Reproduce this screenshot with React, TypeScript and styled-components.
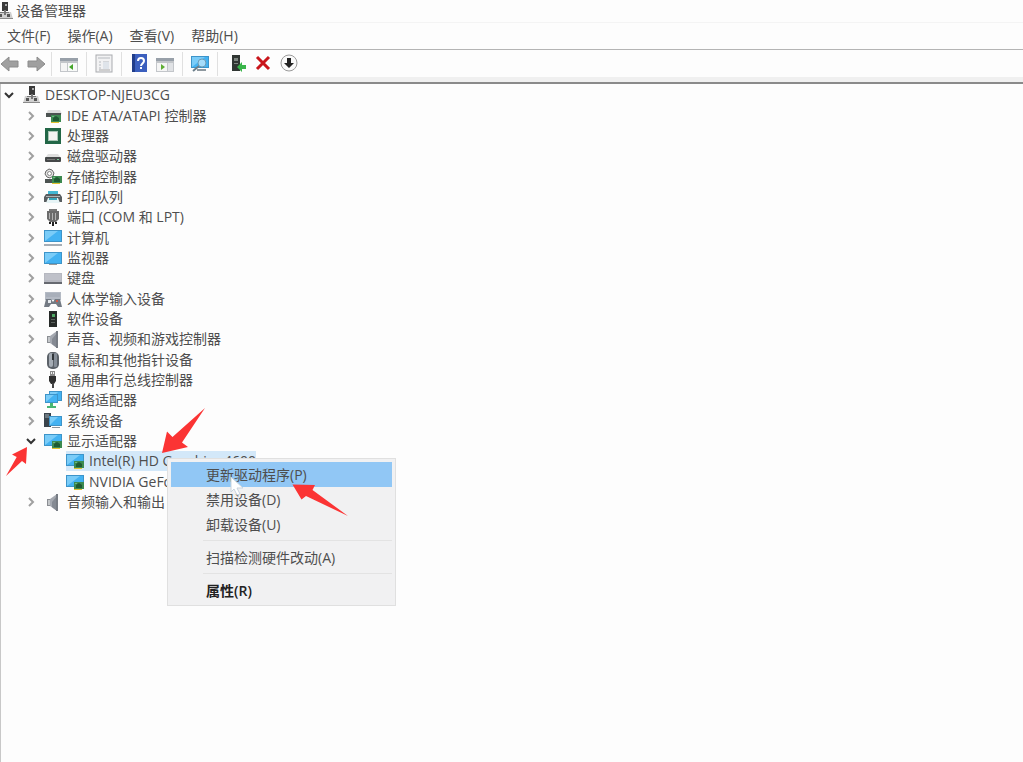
import React from "react";
import styled, { createGlobalStyle, css } from "styled-components";

const GlobalStyle = createGlobalStyle`
  * { box-sizing: border-box; }
  body {
    margin: 0;
    background: #fdfdfd;
    color: #4e4e4e;
    font-family: "Open Sans", "Noto Sans CJK SC", sans-serif;
    font-size: 14px;
  }
  button { font: inherit; color: inherit; border: 0; padding: 0; background: none; }
  ul { list-style: none; margin: 0; padding: 0; }
`;

const Window = styled.div`
  display: flex;
  flex-direction: column;
  min-height: 100vh;
`;

const TitleBar = styled.header`
  display: flex;
  align-items: center;
  gap: 3px;
  height: 22px;
  overflow: hidden;
`;

const Title = styled.h1`
  margin: 0;
  font-size: 14px;
  line-height: 20px;
  font-weight: 400;
`;

const TitleIcon = styled.span`
  display: flex;
  width: 13px;
  justify-content: flex-end;
  overflow: hidden;
  svg { flex: none; }
`;

const MenuBar = styled.nav`
  display: flex;
  gap: 17px;
  height: 28px;
  padding: 0 7px;
  border-top: 1px solid #f4f4f4;
  border-bottom: 1px solid #b4b4b4;
`;

const MenuButton = styled.button`
  line-height: 26px;
  white-space: nowrap;
`;

const ToolBar = styled.div`
  display: flex;
  align-items: center;
  height: 27px;
`;

const ToolGroup = styled.div`
  display: flex;
  align-items: center;
  gap: 6px;
  height: 24px;
  padding: 0 7px;
  border-right: 1px solid #e0e0e0;
  &:first-child { padding: 0 5px 0 0; }
  &:last-child { border-right: 0; padding: 0 10px; }
`;

const ToolButton = styled.button`
  display: flex;
  width: 20px;
  height: 20px;
  svg { width: 20px; height: 20px; }
`;

const ToolEdge = styled.div`
  height: 7px;
  background: #f0f0f0;
  border-bottom: 2px solid #8a8a8a;
`;

const Pane = styled.main`
  position: relative;
  flex: 1;
  padding-top: 1px;
  border-left: 1px solid #c8c8c8;
`;

const Row = styled.li<{ $level: number }>`
  display: flex;
  align-items: center;
  gap: 5px;
  height: 20px;
  padding-left: ${(p) => p.$level * 22}px;
  &:nth-child(3n + 1) { margin-bottom: 1px; }
`;

const Toggle = styled.button`
  display: flex;
  align-items: center;
  justify-content: center;
  width: 16px;
  height: 20px;
  visibility: ${(p) => (p.disabled ? "hidden" : "visible")};
`;

const Node = styled.span<{ $selected?: boolean }>`
  display: flex;
  align-items: center;
  gap: 5px;
  height: 20px;
  line-height: 20px;
  white-space: nowrap;
  ${(p) => p.$selected && css`background: #d3e8f9;`}
  svg { flex: none; }
`;

const ContextMenu = styled.div`
  position: absolute;
  left: 166px;
  top: 374px;
  width: 229px;
  padding: 3px 3px 2px;
  background: #f1f1f2;
  border: 1px solid #e0e0e0;
`;

const ContextItem = styled.button<{ $active?: boolean; $strong?: boolean }>`
  display: block;
  width: 100%;
  height: 25px;
  padding-left: 35px;
  line-height: 24px;
  text-align: left;
  white-space: nowrap;
  background: ${(p) => (p.$active ? "#91c7f5" : "transparent")};
  ${(p) => p.$strong && css`font-weight: 600; color: #222;`}
`;

const Separator = styled.hr`
  height: 1px;
  margin: 3px 0 4px 32px;
  border: 0;
  background: #e3e3e3;
`;

const Annotations = styled.svg`
  position: absolute;
  left: 0;
  top: 0;
  pointer-events: none;
`;

const screen = (x: number, y: number, w: number, h: number) => (
  <>
    <rect x={x} y={y} width={w} height={h} fill="#3d94c9" />
    <rect x={x + 1} y={y + 1} width={w - 2} height={h - 2} fill="#43b2f2" />
    <path d={`M${x + 1} ${y + h - 1}V${y + 1}H${x + w - 4}Z`} fill="#7accf8" />
  </>
);

const chip = (x: number, y: number) => (
  <>
    <rect x={x} y={y + 6} width="8" height="2" fill="#e2c02f" />
    <rect x={x} y={y} width="10" height="7" fill="#3c8a50" />
    <path d={`M${x + 2} ${y + 3}l3-2 3 2v3H${x + 2}z`} fill="#1f5a33" />
    <rect x={x + 1} y={y + 1} width="2" height="1" fill="#6db581" />
  </>
);

const glyphs: Record<string, React.ReactNode> = {
  root: (
    <>
      <rect x="7" y="0" width="6" height="9" fill="#3a3a3a" />
      <rect x="10" y="2" width="2" height="2" fill="#aaa" />
      <path d="M3 10h13l2 7H1z" fill="#cfcfcf" />
      <path d="M1 16h17v1H1z" fill="#8a8a8a" />
      <path d="M9 8h2v5H9zM5 10h9v1H5z" fill="#777" />
      <rect x="4" y="12" width="3" height="3" fill="#555" />
      <rect x="12" y="12" width="3" height="3" fill="#555" />
    </>
  ),
  ide: (
    <>
      <path d="M4 3h12l2 4H2z" fill="#dcdcdc" />
      <rect x="2" y="6" width="15" height="4" fill="#4c5351" />
      {chip(7, 8)}
    </>
  ),
  cpu: (
    <>
      <rect x="1" y="1" width="16" height="16" fill="#226747" />
      <rect x="4" y="4" width="10" height="10" fill="#a9c5b5" />
      <rect x="5" y="5" width="8" height="8" fill="#f3f3f1" />
    </>
  ),
  disk: (
    <>
      <path d="M4 7h10l3 4H1z" fill="#dedede" />
      <rect x="1" y="10" width="16" height="5" rx="1" fill="#454849" />
      <rect x="3" y="12" width="8" height="1" fill="#777" />
      <rect x="13" y="12" width="2" height="1" fill="#76c694" />
    </>
  ),
  storage: (
    <>
      <path d="M5 1l3 1 2 3-1 3-3 2-3-1-2-3 1-3z" fill="#e4e4e4" stroke="#666" />
      <circle cx="5.500" cy="5.500" r="2" fill="#fff" stroke="#888" />
      <rect x="1" y="11" width="10" height="4" fill="#4c5351" />
      {chip(8, 8)}
    </>
  ),
  printer: (
    <>
      <path d="M4 3h10v4H4z" fill="#43b7d4" />
      <path d="M2 6h14l2 3v5H0V9z" fill="#595e61" />
      <path d="M2 8h14v1H2z" fill="#aeb3b5" />
      <path d="M4 10h10l2 5H2z" fill="#e7f4f6" />
      <path d="M5 10h8v2H5z" fill="#3aa7bd" />
    </>
  ),
  port: (
    <>
      <rect x="5" y="1" width="8" height="4" fill="#777" />
      <path d="M3 3h12v8l-3 3H6l-3-3z" fill="#6b6b6b" />
      <path d="M5 5h1v6H5zM8 5h1v7H8zM11 5h1v7h-1z" fill="#b2b2b2" />
      <path d="M5 14h2v2H5zM8 14h2v4H8zM11 14h2v2h-2z" fill="#222" />
    </>
  ),
  computer: (
    <>
      {screen(0, 1, 18, 12)}
      <path d="M0 15h18v2H0z" fill="#a6adb5" />
    </>
  ),
  monitor: (
    <>
      {screen(0, 3, 18, 12)}
      <path d="M5 15h8v1H5z" fill="#999" />
    </>
  ),
  keyboard: (
    <>
      <rect x="0" y="4" width="18" height="10" fill="#b6b8c0" />
      <path d="M1 6h16M1 8h16M1 10h16" stroke="#c8cad2" />
      <rect x="0" y="13" width="18" height="2" fill="#666970" />
    </>
  ),
  hid: (
    <>
      <rect x="1" y="2" width="16" height="8" fill="#b4bac4" />
      <path d="M2 4h14M2 6h14" stroke="#9da4b0" />
      <path d="M0 17l2-8h5l2 3 2-3h5l2 8h-4l-2-3H7l-2 3z" fill="#737a83" />
      <rect x="4" y="10" width="3" height="3" fill="#e6eaee" />
      <rect x="12" y="10" width="2" height="2" fill="#d15a4a" />
    </>
  ),
  software: (
    <>
      <rect x="5" y="1" width="8" height="16" fill="#262a28" />
      <rect x="8" y="4" width="3" height="3" fill="#4ea863" />
      <path d="M7 9h4v1H7zM7 12h4v1H7z" fill="#5b625e" />
    </>
  ),
  speaker: (
    <>
      <path d="M3 6h4v7H3z" fill="#8b8e93" />
      <path d="M6 6l7-5v17l-7-5z" fill="#a4a8b0" />
      <path d="M8 9l5-6v15l-5-4z" fill="#858a93" />
      <path d="M12 1h2v17h-2z" fill="#777c84" />
      <path d="M4 7h2v5H4z" fill="#c3c6c9" />
    </>
  ),
  mouse: (
    <>
      <rect x="3" y="1" width="12" height="17" rx="5" fill="#5b6168" />
      <rect x="5" y="2" width="4" height="14" rx="2" fill="#a5acb4" />
      <rect x="10" y="2" width="3" height="14" rx="1" fill="#868e98" />
      <rect x="8" y="3" width="2" height="6" fill="#31363b" />
    </>
  ),
  usb: (
    <>
      <rect x="6" y="0" width="5" height="5" fill="#8a8a8a" />
      <path d="M7 1h1v2H7zM9 1h1v2H9z" fill="#f2f2f2" />
      <path d="M5 5h7v5l-2 3H7l-2-3z" fill="#303030" />
      <path d="M8 12h2v5H8z" fill="#444" />
    </>
  ),
  network: (
    <>
      {screen(5, 0, 13, 10)}
      {screen(1, 3, 13, 9)}
      <path d="M6 12h3v3h3v2H3v-2h3z" fill="#48b573" />
    </>
  ),
  system: (
    <>
      <rect x="0" y="1" width="7" height="14" fill="#3a444c" />
      <path d="M1 3h4M1 5h4" stroke="#9eabb3" />
      {screen(5, 4, 13, 10)}
      <path d="M8 15h8v1H8z" fill="#8a939a" />
    </>
  ),
  display: (
    <>
      {screen(0, 2, 18, 12)}
      {chip(8, 9)}
    </>
  ),
};

const Icon = ({ name }: { name: string }) => (
  <svg width="18" height="18" viewBox="0 0 18 18" aria-hidden="true">{glyphs[name]}</svg>
);

const toolPanel = (flip: boolean) => (
  <>
    <rect x="1" y="4" width="18" height="14" fill="#c3c6ca" />
    <rect x="1" y="4" width="18" height="3" fill="#98a0a9" />
    <rect x="2" y="9" width={flip ? 10 : 6} height="8" fill="#f5f5f5" />
    <rect x={flip ? 13 : 9} y="9" width={flip ? 5 : 9} height="8" fill={flip ? "#e0e2e5" : "#f8faf8"} />
    {flip ? <path d="M6 10l4 3-4 3z" fill="#5dad32" /> : <path d="M14 10l-4 3 4 3z" fill="#45a52b" />}
  </>
);

const arrow = "M1 10l8-7v4h9v6H9v4z";

const tools: { label: string; art: React.ReactNode }[][] = [
  [
    { label: "后退", art: <path d={arrow} fill="#a0a0a0" stroke="#8c8c8c" /> },
    { label: "前进", art: <path d={arrow} transform="matrix(-1 0 0 1 20 0)" fill="#a0a0a0" stroke="#8c8c8c" /> },
  ],
  [{ label: "显示/隐藏控制台树", art: toolPanel(false) }],
  [
    {
      label: "属性",
      art: (
        <>
          <rect x="2" y="1" width="16" height="17" fill="#f2f2f3" stroke="#a9abaf" />
          <path d="M4 4h12M5 8h2M9 8h6M5 11h2M9 11h6M5 14h2" stroke="#b6babf" />
          <rect x="9" y="8" width="6" height="7" fill="#dfe4ea" />
          <path d="M5 16h11" stroke="#aaa" />
        </>
      ),
    },
  ],
  [
    {
      label: "帮助",
      art: (
        <>
          <rect x="3" y="0" width="15" height="18" fill="#3b5fbe" />
          <rect x="3" y="0" width="3" height="18" fill="#213d8a" />
          <path d="M9 7c0-4 6-4 6 0 0 2-3 3-3 5" fill="none" stroke="#fff" strokeWidth="2" />
          <rect x="11" y="13" width="2" height="2" fill="#fff" />
        </>
      ),
    },
    { label: "操作窗格", art: toolPanel(true) },
  ],
  [
    {
      label: "扫描检测硬件改动",
      art: (
        <>
          {screen(1, 2, 18, 12)}
          <circle cx="12" cy="9" r="4" fill="#a5dcfa" stroke="#6d9bb5" />
          <path d="M9 12l-6 5" stroke="#6c7f8b" strokeWidth="2" />
          <path d="M7 16h9" stroke="#8e989f" strokeWidth="2" />
        </>
      ),
    },
  ],
  [
    {
      label: "更新驱动程序",
      art: (
        <>
          <rect x="4" y="1" width="8" height="16" fill="#303633" />
          <path d="M6 4h4v3H6zM6 9h4v1H6z" fill="#7e8681" />
          <path d="M9 13l5-5v3h4v4h-4v3z" fill="#39b54a" />
        </>
      ),
    },
    { label: "卸载设备", art: <path d="M3 3l12 12M15 3L3 15" stroke="#c9151b" strokeWidth="3" /> },
    {
      label: "禁用设备",
      art: (
        <>
          <circle cx="9" cy="9" r="8" fill="#fafafa" stroke="#9b9b9b" />
          <path d="M7 4h4v5h3l-5 5-5-5h3z" fill="#222" />
        </>
      ),
    },
  ],
];

type Item = { icon: string; text: string; level: number; open?: boolean; leaf?: boolean; selected?: boolean };

const items: Item[] = [
  { icon: "root", text: "DESKTOP-NJEU3CG", level: 0, open: true },
  { icon: "ide", text: "IDE ATA/ATAPI 控制器", level: 1 },
  { icon: "cpu", text: "处理器", level: 1 },
  { icon: "disk", text: "磁盘驱动器", level: 1 },
  { icon: "storage", text: "存储控制器", level: 1 },
  { icon: "printer", text: "打印队列", level: 1 },
  { icon: "port", text: "端口 (COM 和 LPT)", level: 1 },
  { icon: "computer", text: "计算机", level: 1 },
  { icon: "monitor", text: "监视器", level: 1 },
  { icon: "keyboard", text: "键盘", level: 1 },
  { icon: "hid", text: "人体学输入设备", level: 1 },
  { icon: "software", text: "软件设备", level: 1 },
  { icon: "speaker", text: "声音、视频和游戏控制器", level: 1 },
  { icon: "mouse", text: "鼠标和其他指针设备", level: 1 },
  { icon: "usb", text: "通用串行总线控制器", level: 1 },
  { icon: "network", text: "网络适配器", level: 1 },
  { icon: "system", text: "系统设备", level: 1 },
  { icon: "display", text: "显示适配器", level: 1, open: true },
  { icon: "display", text: "Intel(R) HD Graphics 4600", level: 2, leaf: true, selected: true },
  { icon: "display", text: "NVIDIA GeForce", level: 2, leaf: true },
  { icon: "speaker", text: "音频输入和输出", level: 1 },
];

const Chevron = ({ open }: { open?: boolean }) => (
  <svg width="12" height="12" viewBox="0 0 12 12" fill="none" aria-hidden="true">
    {open ? (
      <path d="M2 4l4 4 4-4" stroke="#333" strokeWidth="2" />
    ) : (
      <path d="M4 2l4 4-4 4" stroke="#a0a0a0" strokeWidth="2" />
    )}
  </svg>
);

export default function App() {
  return (
    <Window>
      <GlobalStyle />
      <TitleBar>
        <TitleIcon><Icon name="root" /></TitleIcon>
        <Title>设备管理器</Title>
      </TitleBar>
      <MenuBar>
        {["文件(F)", "操作(A)", "查看(V)", "帮助(H)"].map((m) => (
          <MenuButton key={m}>{m}</MenuButton>
        ))}
      </MenuBar>
      <ToolBar role="toolbar">
        {tools.map((group, i) => (
          <ToolGroup key={i}>
            {group.map((t) => (
              <ToolButton key={t.label} aria-label={t.label}>
                <svg viewBox="0 0 20 20" aria-hidden="true">{t.art}</svg>
              </ToolButton>
            ))}
          </ToolGroup>
        ))}
      </ToolBar>
      <ToolEdge />
      <Pane>
        <ul role="tree">
          {items.map((it) => (
            <Row key={it.text} $level={it.level} role="treeitem" aria-level={it.level + 1} aria-selected={!!it.selected}>
              <Toggle disabled={it.leaf} aria-label={it.open ? "折叠" : "展开"}>
                <Chevron open={it.open} />
              </Toggle>
              <Node $selected={it.selected}>
                <Icon name={it.icon} />
                {it.text}
              </Node>
            </Row>
          ))}
        </ul>
        <ContextMenu role="menu">
          <ContextItem role="menuitem" $active>更新驱动程序(P)</ContextItem>
          <ContextItem role="menuitem">禁用设备(D)</ContextItem>
          <ContextItem role="menuitem">卸载设备(U)</ContextItem>
          <Separator />
          <ContextItem role="menuitem">扫描检测硬件改动(A)</ContextItem>
          <Separator />
          <ContextItem role="menuitem" $strong>属性(R)</ContextItem>
        </ContextMenu>
        <Annotations width="360" height="450" viewBox="1 84 360 450" aria-hidden="true">
          <path d="M231 477v15l3-3 3 6 3-1-3-6h6z" fill="#fff" stroke="#c9d4de" />
          <g fill="#fb3434">
            <path d="M6 476L16.700 457L12 454.500L27 447L26 464L22 461Z" />
            <path d="M205 408L172.500 437L167 431.500L162 453L188 447L182 442.500Z" />
            <path d="M348 516L312.500 490L315 485L292.500 484.500L301.500 499.500L306 496Z" />
          </g>
        </Annotations>
      </Pane>
    </Window>
  );
}
